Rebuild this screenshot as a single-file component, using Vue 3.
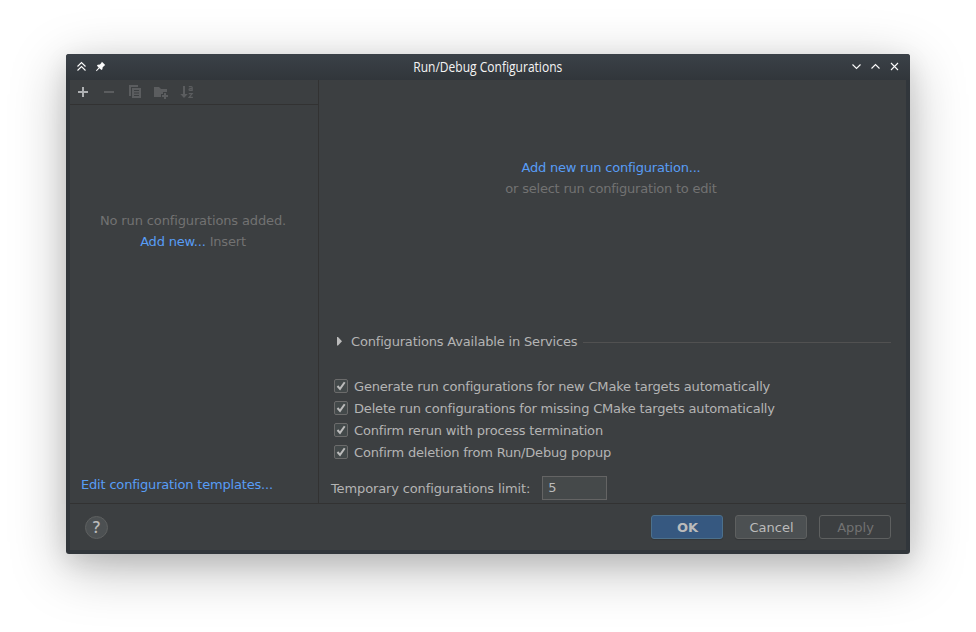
<script setup>
import { ref } from 'vue'

const options = ref([
  'Generate run configurations for new CMake targets automatically',
  'Delete run configurations for missing CMake targets automatically',
  'Confirm rerun with process termination',
  'Confirm deletion from Run/Debug popup',
])
const limit = ref('5')
</script>

<template>
  <div class="desktop">
    <div class="window">
      <header class="titlebar">
        <div class="title-icons">
          <svg width="11" height="11" viewBox="0 0 11 11" class="line"><path d="M1.500 5.500l4-4 4 4M1.500 9.500l4-4 4 4" /></svg>
          <svg width="11" height="11" viewBox="0 0 11 11"><path d="M6.900 .8L10.200 4 9.300 4.700 7.700 6.300 7.400 8.300 6.400 9 4.500 7.200 1.600 10.200 1 9.600 3.700 6.500 1.900 4.800 2.700 3.800 4.900 3.500 6.300 1.900z" fill="#fcfcfc" /></svg>
        </div>
        <div class="title"><span>Run/Debug Configurations</span></div>
        <div class="title-buttons">
          <svg width="11" height="11" viewBox="0 0 11 11" class="line"><path d="M1.500 3.500l4 4 4-4" /></svg>
          <svg width="11" height="11" viewBox="0 0 11 11" class="line"><path d="M1.500 7.500l4-4 4 4" /></svg>
          <svg width="11" height="11" viewBox="0 0 11 11" class="line"><path d="M2 2l7 7M9 2l-7 7" /></svg>
        </div>
      </header>
      <main class="body">
        <aside class="side">
          <div class="toolbar">
            <svg width="16" height="16" viewBox="0 0 16 16" fill="#afb1b3"><path d="M7 3h2v4h4v2H9v4H7V9H3V7h4z" /></svg>
            <svg width="16" height="16" viewBox="0 0 16 16" fill="#5b5d5f"><path d="M3 7h10v2H3z" /></svg>
            <svg width="16" height="16" viewBox="0 0 16 16" fill="#5b5d5f"><path d="M2 1h9v2H4v9H2z" /><path fill-rule="evenodd" d="M5 4h9v10H5zM7 6v1h5V6zM7 8.500v1h5v-1zM7 11v1h5v-1z" /></svg>
            <svg width="16" height="16" viewBox="0 0 16 16" fill="#5b5d5f"><path d="M1 3h5l2 2h6v3h-4v2H8v3H1z" /><path d="M11 9h2v2h2v2h-2v2h-2v-2H9v-2h2z" /></svg>
            <svg width="16" height="16" viewBox="0 0 16 16" fill="#5b5d5f"><path d="M4 2h2v8h2.700L5 14 1.300 10H4z" /><path d="M9.800 2.600H12.200Q13.200 2.600 13.200 3.600V7M13.200 4.600H11Q10 4.600 10 5.500T11 6.400H13.200M9.700 9.600H13.200L10.100 13.400H13.900" fill="none" stroke="#5b5d5f" stroke-width="1.200" /></svg>
          </div>
          <div class="empty">
            <p class="loose">No run configurations added.</p>
            <p><a>Add new...</a> Insert</p>
          </div>
          <a class="templates">Edit configuration templates...</a>
        </aside>
        <section class="content">
          <div class="hint">
            <p><a>Add new run configuration...</a></p>
            <p>or select run configuration to edit</p>
          </div>
          <div class="services">
            <svg width="6" height="10" viewBox="0 0 6 10"><path d="M0 0h1L5 4.300 1 8.600H0z" fill="#bbb" /></svg>
            <span>Configurations Available in Services</span>
            <i></i>
          </div>
          <div class="options">
            <label v-for="option in options" :key="option">
              <span class="box"><svg width="12" height="12" viewBox="0 0 12 12"><path d="M2.500 6l2.500 2.900L9.700 2.200" /></svg></span>
              <span>{{ option }}</span>
            </label>
          </div>
          <div class="limit">
            <span class="loose">Temporary configurations limit:</span>
            <input v-model="limit" />
          </div>
        </section>
      </main>
      <footer class="footer">
        <button class="help">?</button>
        <div class="actions">
          <button class="primary">OK</button>
          <button>Cancel</button>
          <button class="disabled">Apply</button>
        </div>
      </footer>
    </div>
  </div>
</template>

<style>
body {
  background: #fff;
}
</style>

<style scoped>
* {
  box-sizing: border-box;
}
.desktop {
  height: 632px;
  padding: 54px 66px;
  overflow: hidden;
  font: 13px/21px "DejaVu Sans", sans-serif;
  letter-spacing: -0.18px;
  color: #b4b4b4;
}
.window {
  display: flex;
  flex-direction: column;
  width: 844px;
  height: 500px;
  padding: 0 4px 4px;
  border-radius: 3px;
  background: #31363b;
  box-shadow: 0 14px 56px rgba(0, 0, 0, 0.27), 0 8px 24px rgba(0, 0, 0, 0.1);
}
.titlebar {
  display: flex;
  justify-content: space-between;
  align-items: center;
  height: 26px;
  margin: 0 -4px;
  padding: 0 10px;
  border-radius: 3px 3px 0 0;
  background: linear-gradient(#3b4148, #31363b);
}
.title-icons,
.title-buttons {
  display: flex;
  gap: 8px;
  width: 49px;
  padding-bottom: 2px;
}
.line {
  fill: none;
  stroke: #fcfcfc;
  stroke-width: 1.1;
}
.title {
  display: flex;
  justify-content: center;
  font: 14.5px/26px "Open Sans", sans-serif;
  letter-spacing: 0;
  color: #f4f4f4;
  white-space: nowrap;
}
.title span {
  transform: scaleX(0.83);
}
.body {
  display: flex;
  height: 423px;
  background: #3c3f41;
}
.side {
  display: flex;
  flex-direction: column;
  width: 249px;
  border-right: 1px solid #323232;
}
.toolbar {
  display: flex;
  align-items: center;
  gap: 10px;
  height: 25px;
  padding: 0 5px;
  border-bottom: 1px solid #323232;
}
.empty {
  padding: 105px 2px 0 0;
  text-align: center;
  color: #727272;
}
p {
  margin: 0;
}
.loose {
  letter-spacing: -0.13px;
}
a {
  color: #589df6;
}
.templates {
  margin: auto 0 8px 11px;
}
.content {
  flex: 1;
  padding: 0 15px 0 12px;
}
.hint {
  padding: 77px 0 0;
  text-align: center;
  letter-spacing: -0.21px;
  color: #727272;
}
.services {
  display: flex;
  align-items: center;
  height: 21px;
  margin: 132px 0 0 6px;
}
.services span {
  margin: 0 6px 0 8px;
}
.services i {
  flex: 1;
  height: 1px;
  margin-top: 2px;
  background: #515151;
}
.options {
  margin: 23px 0 0 3px;
}
.options label {
  display: flex;
  align-items: center;
  gap: 6px;
  height: 22px;
}
.box {
  display: flex;
  width: 14px;
  height: 14px;
  border: 1px solid #6b6b6b;
  border-radius: 2px;
  background: #43494a;
}
.box path {
  fill: none;
  stroke: #bbb;
  stroke-width: 2;
}
.limit {
  display: flex;
  align-items: center;
  gap: 12px;
  margin-top: 13px;
}
.limit input {
  width: 65px;
  height: 24px;
  padding: 0 5px 2px;
  border: 1px solid #646464;
  background: #45494a;
  color: #bbb;
  font: inherit;
}
.footer {
  display: flex;
  justify-content: space-between;
  align-items: center;
  height: 47px;
  padding: 0 15px;
  border-top: 1px solid #323232;
  background: #3c3f41;
}
.actions {
  display: flex;
  gap: 12px;
}
button {
  width: 72px;
  height: 24px;
  padding: 0 0 0 1px;
  border: 1px solid #5e6060;
  border-radius: 3px;
  background: #4c5052;
  color: #bbb;
  font: inherit;
  box-shadow: 0 1px 1px rgba(0, 0, 0, 0.15);
}
button.primary {
  border-color: #4c708c;
  background: #365880;
  font-weight: bold;
}
button.disabled {
  background: none;
  color: #727272;
  box-shadow: none;
}
button.help {
  width: 23px;
  height: 23px;
  padding: 0;
  border-radius: 50%;
  font: 600 16px/20px "Open Sans", sans-serif;
  box-shadow: none;
}
</style>
